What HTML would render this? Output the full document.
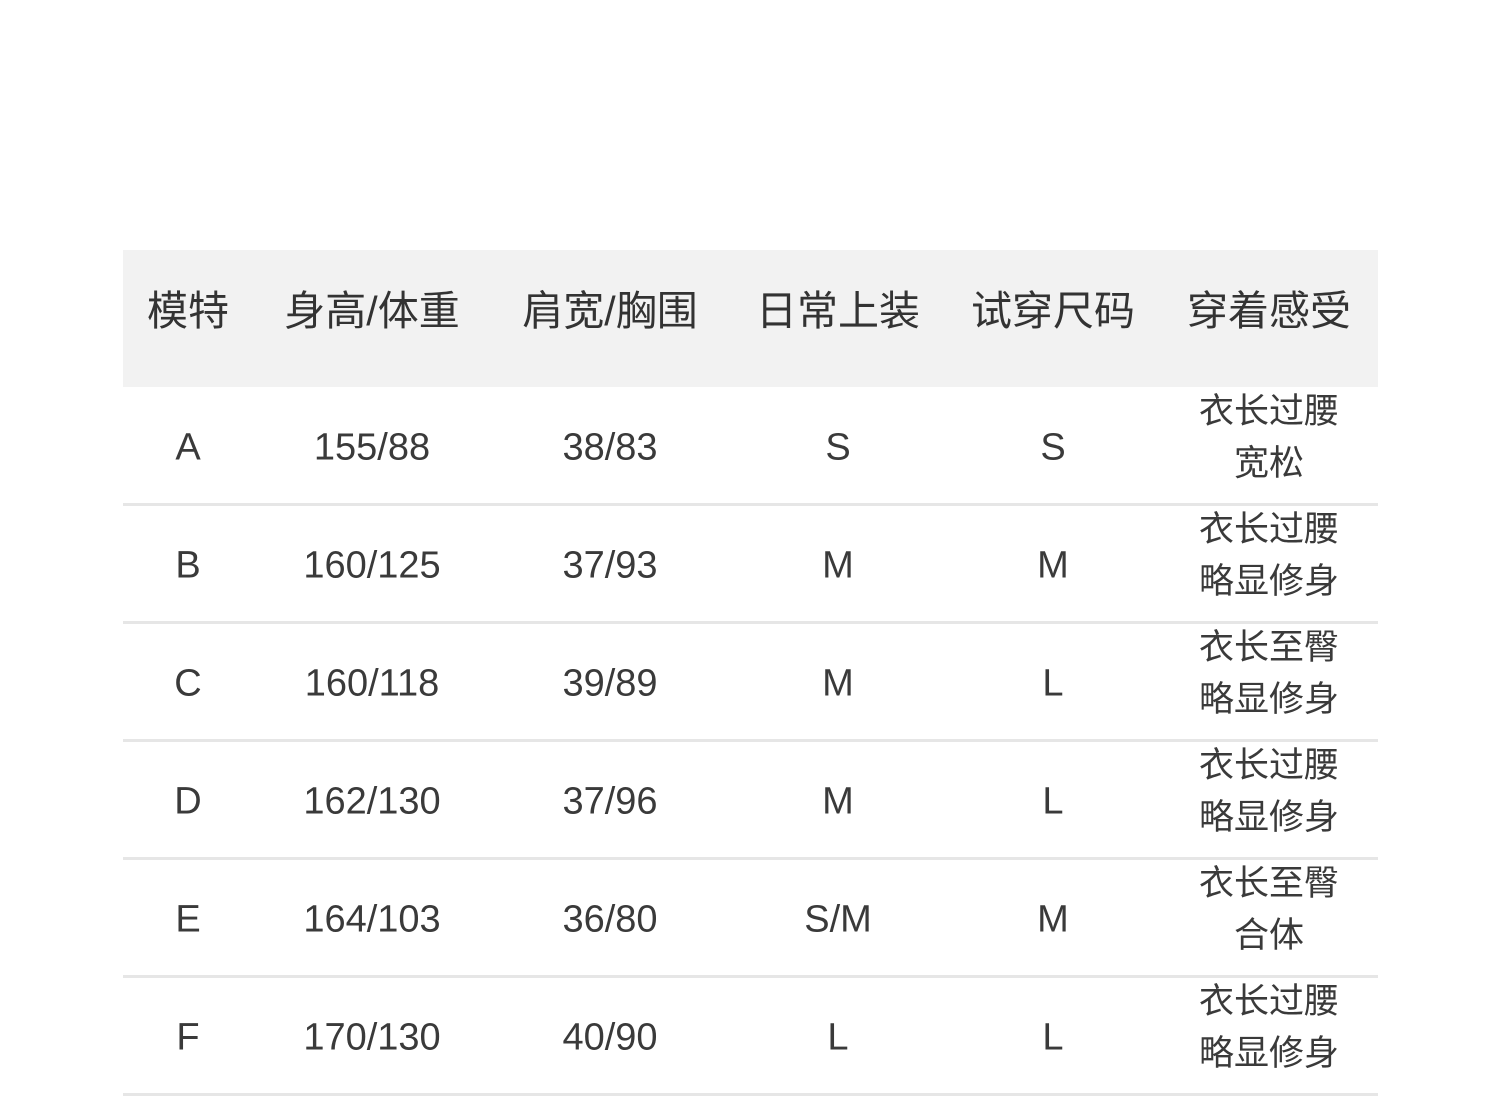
<!DOCTYPE html>
<html><head><meta charset="utf-8"><style>
body{margin:0;width:1500px;height:1096px;background:#fff;position:relative;overflow:hidden;font-family:"Liberation Sans","Noto Sans CJK SC",sans-serif;color:#333}
.h{position:absolute;left:123px;top:250px;width:1255px;height:137px;background:#f2f2f2}
.b{position:absolute;left:123px;width:1255px;height:3px;background:#e6e6e6}
.t{position:absolute;transform:translate(-50%,-50%);white-space:nowrap;text-align:center}
.hd{font-size:41px;color:#333}
.c{font-size:38px;color:#3a3a3a}
.m{font-size:35px;line-height:52px;color:#3a3a3a}
</style></head><body>
<div class="h"></div>
<div class="t hd" style="left:188px;top:307px">模特</div>
<div class="t hd" style="left:372px;top:307px">身高/体重</div>
<div class="t hd" style="left:610px;top:307px">肩宽/胸围</div>
<div class="t hd" style="left:838px;top:307px">日常上装</div>
<div class="t hd" style="left:1053px;top:307px">试穿尺码</div>
<div class="t hd" style="left:1269px;top:307px">穿着感受</div>

<div class="b" style="top:503px"></div>
<div class="b" style="top:621px"></div>
<div class="b" style="top:739px"></div>
<div class="b" style="top:857px"></div>
<div class="b" style="top:975px"></div>
<div class="b" style="top:1093px"></div>

<div class="t c" style="left:188px;top:448px">A</div><div class="t c" style="left:372px;top:448px">155/88</div><div class="t c" style="left:610px;top:448px">38/83</div><div class="t c" style="left:838px;top:448px">S</div><div class="t c" style="left:1053px;top:448px">S</div><div class="t m" style="left:1269px;top:438px">衣长过腰<br>宽松</div>
<div class="t c" style="left:188px;top:566px">B</div><div class="t c" style="left:372px;top:566px">160/125</div><div class="t c" style="left:610px;top:566px">37/93</div><div class="t c" style="left:838px;top:566px">M</div><div class="t c" style="left:1053px;top:566px">M</div><div class="t m" style="left:1269px;top:556px">衣长过腰<br>略显修身</div>
<div class="t c" style="left:188px;top:684px">C</div><div class="t c" style="left:372px;top:684px">160/118</div><div class="t c" style="left:610px;top:684px">39/89</div><div class="t c" style="left:838px;top:684px">M</div><div class="t c" style="left:1053px;top:684px">L</div><div class="t m" style="left:1269px;top:674px">衣长至臀<br>略显修身</div>
<div class="t c" style="left:188px;top:802px">D</div><div class="t c" style="left:372px;top:802px">162/130</div><div class="t c" style="left:610px;top:802px">37/96</div><div class="t c" style="left:838px;top:802px">M</div><div class="t c" style="left:1053px;top:802px">L</div><div class="t m" style="left:1269px;top:792px">衣长过腰<br>略显修身</div>
<div class="t c" style="left:188px;top:920px">E</div><div class="t c" style="left:372px;top:920px">164/103</div><div class="t c" style="left:610px;top:920px">36/80</div><div class="t c" style="left:838px;top:920px">S/M</div><div class="t c" style="left:1053px;top:920px">M</div><div class="t m" style="left:1269px;top:910px">衣长至臀<br>合体</div>
<div class="t c" style="left:188px;top:1038px">F</div><div class="t c" style="left:372px;top:1038px">170/130</div><div class="t c" style="left:610px;top:1038px">40/90</div><div class="t c" style="left:838px;top:1038px">L</div><div class="t c" style="left:1053px;top:1038px">L</div><div class="t m" style="left:1269px;top:1028px">衣长过腰<br>略显修身</div>
</body></html>
